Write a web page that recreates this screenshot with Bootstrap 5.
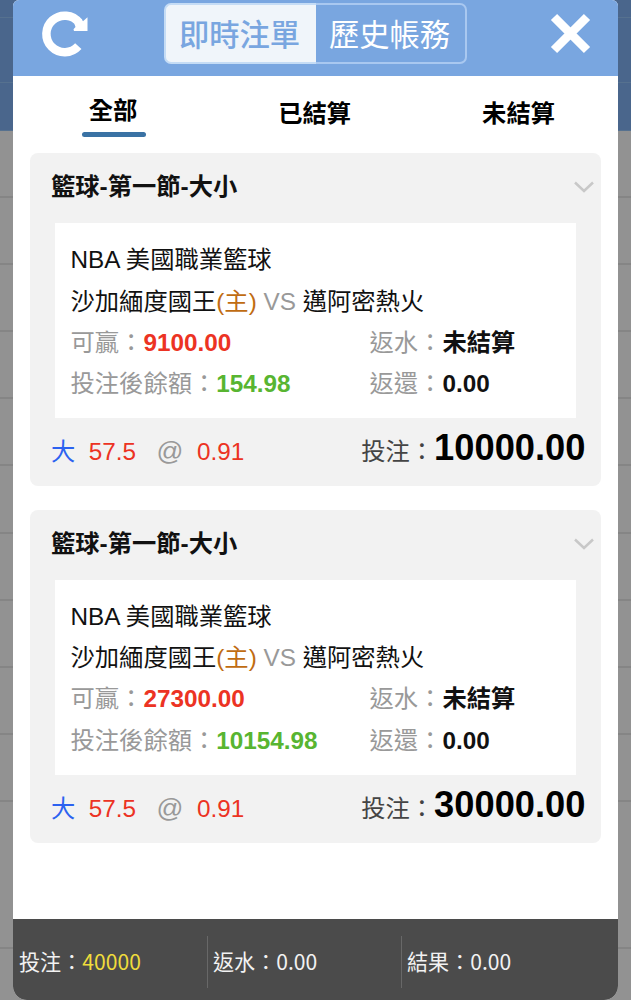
<!DOCTYPE html>
<html lang="zh-Hant">
<head>
<meta charset="utf-8">
<meta name="viewport" content="width=device-width, initial-scale=1">
<title>即時注單</title>
<link href="https://cdn.jsdelivr.net/npm/bootstrap@5.3.0/dist/css/bootstrap.min.css" rel="stylesheet">
<style>
body{font-family:"Liberation Sans","Noto Sans CJK TC",sans-serif;font-size:24.3px;line-height:41.2px;color:#111;background:#929292;height:1000px;overflow:hidden;white-space:nowrap}
.stage{grid-template:1000px/631px}
.stage>*{grid-area:1/1;min-width:0}
/* dimmed page behind the dialog */
.behind>div{border-bottom:2px solid #858585;height:67.1px;flex:none}
.behind>.bar{background:#4a668c;border-bottom:1px solid #56718f}
.dialog{margin:0 13px;background:#fff;border-radius:6px 6px 14px 14px;overflow:hidden}
.topbar{height:76px;background:#79a6e0;padding:3px 27px 12px 28px}
.switch{margin-left:-9px}
.switch .btn{width:152px;height:61px;padding:1px 0 0;font-size:30.3px;line-height:60px;border:2px solid #a9c8f0;color:#fff;border-radius:7px}
.switch .btn.active{background:#f0f5fa;color:#79a6e0;border-color:#c5dcf5;border-right:0;font-weight:500;padding-right:2px}
.switch .btn+.btn{margin-left:-1px!important;border-left:0}
.tabs{height:77px;padding:18px 63px 0 69px;font-weight:700;line-height:34px;color:#000}
.tabs .pick{width:64px;height:43px;padding-right:2px}
.tabs .pick::after{content:"";display:block;width:64px;height:5px;margin-top:4px;border-radius:3px;background:#3a72a4}
.tab-b,.tab-c{padding-top:3px}
.tab-b{margin-right:131px}
.bet{margin:0 17px 23.6px;height:333px;background:#f2f2f2;border-radius:8px}
.bet-head{height:70px;padding:0 6px 2px 21px;font-weight:700}
.bet-body{height:195px;margin:0 25px;padding:16.4px 15px 13px 15.5px;background:#fff}
.bet-body .line{height:41.2px}
.left-part{width:299px}
.bet-foot{height:68px;padding:0 15.5px 0 21px}
.odds{gap:13.5px}
.odds .at{font-size:26.5px;margin:0 0 0 7px}
.stake{font-size:36.3px;font-weight:700;color:#000}
.sum{margin-top:-4px}
.c-dim{color:#999}.c-red{color:#ec3323}.c-green{color:#58b531}.c-home{color:#c06c12}.c-blue{color:#2c62f0}.c-label{color:#444}
.totals{height:81px;background:#4b4b4b;color:#f2f2f2;font:21.1px/50px "Noto Sans CJK TC",sans-serif;padding-top:17px}
.totals>div{width:194px;height:52px;padding-left:6px}
.totals>div+div{border-left:1px solid #686868;padding-left:5px}
.c-yellow{color:#f0dc3c}
</style>
</head>
<body>
<div class="stage d-grid">
  <div class="behind d-flex flex-column">
    <div class="bar" style="height:18px"></div><div class="bar" style="height:65px"></div><div class="bar" style="height:48px"></div>
    <div></div><div></div><div></div><div></div><div></div><div></div><div></div><div></div><div></div><div></div>
    <div style="height:147px"></div>
  </div>
  <main class="dialog d-flex flex-column">
    <header class="topbar d-flex justify-content-between align-items-center">
      <svg width="48" height="48" viewBox="0 0 48 48"><path d="M37.3 36.2A18.3 18.3 0 1 1 38.1 12.7" fill="none" stroke="#fff" stroke-width="8.5"/><path d="M46.5 7.3V21H33L32.5 19.2 34.5 17 33.5 14 40 8.5 42 11.3z" fill="#fff"/></svg>
      <div class="switch btn-group">
        <button class="btn active">即時注單</button><button class="btn">歷史帳務</button>
      </div>
      <svg width="41" height="41" viewBox="0 0 41 41"><path d="M4 4 37 37M37 4 4 37" stroke="#fff" stroke-width="8.8"/></svg>
    </header>
    <nav class="tabs d-flex">
      <div class="flex-fill"><div class="pick text-center">全部</div></div><div class="tab-b">已結算</div><div class="tab-c">未結算</div>
    </nav>
    <section class="bet">
      <div class="bet-head d-flex justify-content-between align-items-center"><span>籃球-第一節-大小</span><svg width="22" height="14" viewBox="0 0 22 14"><path d="M2 2.5 11 11 20 2.5" fill="none" stroke="#c8c8c8" stroke-width="2.5"/></svg></div>
      <div class="bet-body">
        <div class="line">NBA 美國職業籃球</div>
        <div class="line">沙加緬度國王<span class="c-home">(主)</span> <span class="c-dim">VS</span> 邁阿密熱火</div>
        <div class="line d-flex"><div class="left-part"><span class="c-dim">可贏：</span><b class="c-red">9100.00</b></div><div><span class="c-dim">返水：</span><b>未結算</b></div></div>
        <div class="line d-flex"><div class="left-part"><span class="c-dim">投注後餘額：</span><b class="c-green">154.98</b></div><div><span class="c-dim">返還：</span><b>0.00</b></div></div>
      </div>
      <div class="bet-foot d-flex justify-content-between align-items-center"><div class="odds d-flex"><span class="c-blue">大</span><span class="c-red">57.5</span><span class="at c-dim">@</span><span class="c-red">0.91</span></div><div class="sum d-flex align-items-baseline"><span class="c-label">投注：</span><span class="stake">10000.00</span></div></div>
    </section>
    <section class="bet">
      <div class="bet-head d-flex justify-content-between align-items-center"><span>籃球-第一節-大小</span><svg width="22" height="14" viewBox="0 0 22 14"><path d="M2 2.5 11 11 20 2.5" fill="none" stroke="#c8c8c8" stroke-width="2.5"/></svg></div>
      <div class="bet-body">
        <div class="line">NBA 美國職業籃球</div>
        <div class="line">沙加緬度國王<span class="c-home">(主)</span> <span class="c-dim">VS</span> 邁阿密熱火</div>
        <div class="line d-flex"><div class="left-part"><span class="c-dim">可贏：</span><b class="c-red">27300.00</b></div><div><span class="c-dim">返水：</span><b>未結算</b></div></div>
        <div class="line d-flex"><div class="left-part"><span class="c-dim">投注後餘額：</span><b class="c-green">10154.98</b></div><div><span class="c-dim">返還：</span><b>0.00</b></div></div>
      </div>
      <div class="bet-foot d-flex justify-content-between align-items-center"><div class="odds d-flex"><span class="c-blue">大</span><span class="c-red">57.5</span><span class="at c-dim">@</span><span class="c-red">0.91</span></div><div class="sum d-flex align-items-baseline"><span class="c-label">投注：</span><span class="stake">30000.00</span></div></div>
    </section>
    <footer class="totals d-flex mt-auto"><div>投注：<span class="c-yellow">40000</span></div><div>返水：0.00</div><div>結果：0.00</div></footer>
  </main>
</div>
<script src="https://cdn.jsdelivr.net/npm/bootstrap@5.3.0/dist/js/bootstrap.bundle.min.js"></script>
</body>
</html>
